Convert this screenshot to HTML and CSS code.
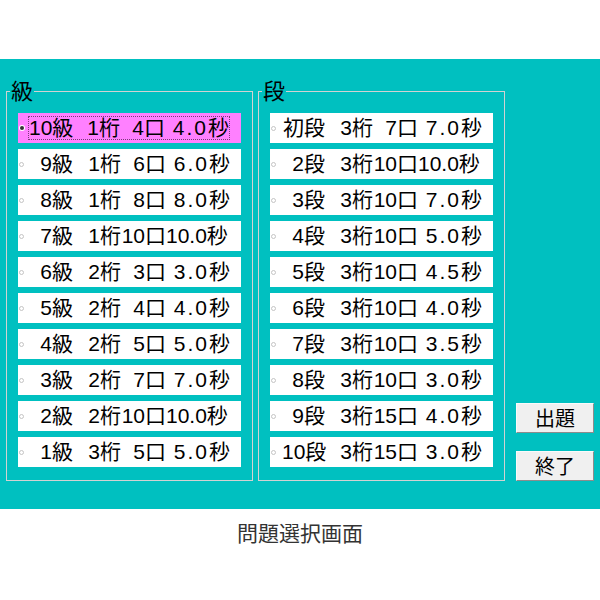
FILE: index.html
```html
<!DOCTYPE html>
<html lang="ja">
<head>
<meta charset="utf-8">
<title>問題選択画面</title>
<link rel="stylesheet" href="styles.css">
</head>
<body>
<div class="panel">
  <fieldset class="group">
    <legend>級</legend>
    <div class="list">
      <label class="item selected"><span class="radio"></span><span class="text"><span class="g">10級</span><span class="d">1桁</span><span class="c">4口</span><span class="t">4.0秒</span></span></label>
      <label class="item"><span class="radio"></span><span class="text"><span class="g">9級</span><span class="d">1桁</span><span class="c">6口</span><span class="t">6.0秒</span></span></label>
      <label class="item"><span class="radio"></span><span class="text"><span class="g">8級</span><span class="d">1桁</span><span class="c">8口</span><span class="t">8.0秒</span></span></label>
      <label class="item"><span class="radio"></span><span class="text"><span class="g">7級</span><span class="d">1桁</span><span class="c">10口</span><span class="t long">10.0秒</span></span></label>
      <label class="item"><span class="radio"></span><span class="text"><span class="g">6級</span><span class="d">2桁</span><span class="c">3口</span><span class="t">3.0秒</span></span></label>
      <label class="item"><span class="radio"></span><span class="text"><span class="g">5級</span><span class="d">2桁</span><span class="c">4口</span><span class="t">4.0秒</span></span></label>
      <label class="item"><span class="radio"></span><span class="text"><span class="g">4級</span><span class="d">2桁</span><span class="c">5口</span><span class="t">5.0秒</span></span></label>
      <label class="item"><span class="radio"></span><span class="text"><span class="g">3級</span><span class="d">2桁</span><span class="c">7口</span><span class="t">7.0秒</span></span></label>
      <label class="item"><span class="radio"></span><span class="text"><span class="g">2級</span><span class="d">2桁</span><span class="c">10口</span><span class="t long">10.0秒</span></span></label>
      <label class="item"><span class="radio"></span><span class="text"><span class="g">1級</span><span class="d">3桁</span><span class="c">5口</span><span class="t">5.0秒</span></span></label>
    </div>
  </fieldset>
  <fieldset class="group">
    <legend>段</legend>
    <div class="list">
      <label class="item"><span class="radio"></span><span class="text"><span class="g">初段</span><span class="d">3桁</span><span class="c">7口</span><span class="t">7.0秒</span></span></label>
      <label class="item"><span class="radio"></span><span class="text"><span class="g">2段</span><span class="d">3桁</span><span class="c">10口</span><span class="t long">10.0秒</span></span></label>
      <label class="item"><span class="radio"></span><span class="text"><span class="g">3段</span><span class="d">3桁</span><span class="c">10口</span><span class="t">7.0秒</span></span></label>
      <label class="item"><span class="radio"></span><span class="text"><span class="g">4段</span><span class="d">3桁</span><span class="c">10口</span><span class="t">5.0秒</span></span></label>
      <label class="item"><span class="radio"></span><span class="text"><span class="g">5段</span><span class="d">3桁</span><span class="c">10口</span><span class="t">4.5秒</span></span></label>
      <label class="item"><span class="radio"></span><span class="text"><span class="g">6段</span><span class="d">3桁</span><span class="c">10口</span><span class="t">4.0秒</span></span></label>
      <label class="item"><span class="radio"></span><span class="text"><span class="g">7段</span><span class="d">3桁</span><span class="c">10口</span><span class="t">3.5秒</span></span></label>
      <label class="item"><span class="radio"></span><span class="text"><span class="g">8段</span><span class="d">3桁</span><span class="c">10口</span><span class="t">3.0秒</span></span></label>
      <label class="item"><span class="radio"></span><span class="text"><span class="g">9段</span><span class="d">3桁</span><span class="c">15口</span><span class="t">4.0秒</span></span></label>
      <label class="item"><span class="radio"></span><span class="text"><span class="g">10段</span><span class="d">3桁</span><span class="c">15口</span><span class="t">3.0秒</span></span></label>
    </div>
  </fieldset>
  <div class="buttons">
    <button class="btn" type="button">出題</button>
    <button class="btn" type="button">終了</button>
  </div>
</div>
<div class="caption">問題選択画面</div>
</body>
</html>
```
FILE: styles.css
```css
html, body {
  margin: 0;
  background: #ffffff;
}
body {
  font-family: "Liberation Sans", "Noto Sans CJK JP", sans-serif;
  color: #000;
}
.panel {
  margin-top: 59px;
  height: 450px;
  box-sizing: border-box;
  background: #00c0c0;
  padding: 0 6px 28px 6px;
  display: flex;
  align-items: flex-end;
}
.group {
  margin: 0;
  padding: 0;
  width: 247px;
  min-width: 0;
  box-sizing: border-box;
  border: 1px solid #d2d2d2;
}
.group + .group {
  margin-left: 5px;
}
.group legend {
  margin-left: 3px;
  padding: 0 1px 4px 1px;
  font-family: "Noto Sans CJK JP", sans-serif;
  font-size: 22px;
  line-height: 24px;
  color: #000;
}
.list {
  display: flex;
  flex-direction: column;
  gap: 6px;
  padding: 8px 11px 13px 11px;
}
.item {
  display: flex;
  align-items: center;
  height: 30px;
  background: #ffffff;
}
.item.selected {
  background: #ff80ff;
}
.radio {
  flex: none;
  width: 5px;
  height: 5px;
  margin-left: 1px;
  box-sizing: border-box;
  border-radius: 50%;
  border: 1px solid #c4c4c4;
}
.item.selected .radio {
  width: 4px;
  height: 4px;
  margin-left: 2px;
  border: none;
  background: #333;
  box-shadow: 0 0 0 1px #fff;
}
.text {
  margin-left: 5px;
  width: 202px;
  height: 24px;
  box-sizing: border-box;
  border: 1px dotted transparent;
  display: flex;
  align-items: center;
  font-size: 21px;
  line-height: 22px;
  white-space: nowrap;
}
.item.selected .text {
  margin-left: 4px;
  border-color: #7a3c7a;
}
.g, .d, .c, .t {
  flex: none;
  text-align: right;
}
.g { width: 43px; }
.d { width: 48px; }
.c { width: 45px; }
.t {
  width: 66px;
  letter-spacing: 2px;
}
.t.long {
  width: 64px;
  padding-right: 6px;
  box-sizing: border-box;
  letter-spacing: 0;
}
.buttons {
  margin-left: 11px;
  display: flex;
  flex-direction: column;
  gap: 18px;
}
.btn {
  width: 78px;
  height: 30px;
  padding: 0;
  background: #f0f0f0;
  border: 1px solid;
  border-color: #fafafa #8c8c8c #8c8c8c #fafafa;
  font-family: "Noto Sans CJK JP", sans-serif;
  font-size: 20px;
  line-height: 26px;
  color: #000;
}
.caption {
  margin-top: 11px;
  text-align: center;
  font-family: "Noto Sans CJK JP", sans-serif;
  font-size: 21px;
  line-height: 24px;
  color: #333;
}
```
